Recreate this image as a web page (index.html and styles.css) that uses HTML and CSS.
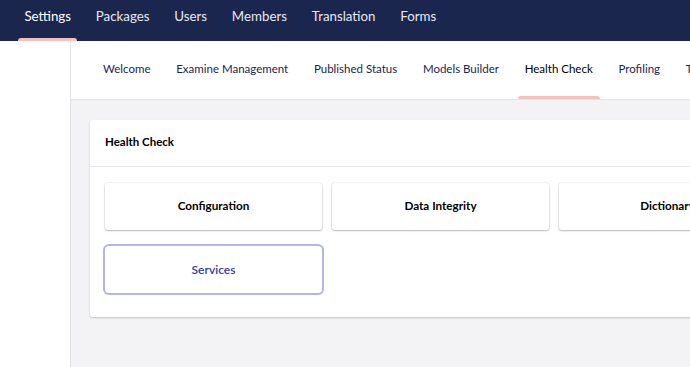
FILE: index.html
```html
<!DOCTYPE html>
<html lang="en">
<head>
<meta charset="utf-8">
<title>Settings - Health Check</title>
<link rel="stylesheet" href="styles.css">
</head>
<body>
<div class="app">
  <header class="topbar">
    <nav class="sections">
      <a class="section active">Settings</a>
      <a class="section">Packages</a>
      <a class="section">Users</a>
      <a class="section">Members</a>
      <a class="section">Translation</a>
      <a class="section">Forms</a>
    </nav>
  </header>
  <div class="body">
    <aside class="sidebar"></aside>
    <main class="main">
      <nav class="tabs">
        <a class="tab">Welcome</a>
        <a class="tab">Examine Management</a>
        <a class="tab">Published Status</a>
        <a class="tab">Models Builder</a>
        <a class="tab active">Health Check</a>
        <a class="tab">Profiling</a>
        <a class="tab">Telemetry data</a>
      </nav>
      <div class="content">
        <section class="card">
          <div class="card-header">Health Check</div>
          <div class="card-body">
            <div class="group">Configuration</div>
            <div class="group">Data Integrity</div>
            <div class="group">Dictionary</div>
            <div class="group">Live Environment</div>
            <div class="group focused">Services</div>
          </div>
        </section>
      </div>
    </main>
  </div>
</div>
</body>
</html>
```
FILE: styles.css
```css
* { box-sizing: border-box; }
html, body { margin: 0; padding: 0; }
body {
  font-family: Lato, "Open Sans", "Liberation Sans", sans-serif;
  width: 690px;
  height: 367px;
  overflow: hidden;
  background: #f3f3f5;
}
.app { display: flex; flex-direction: column; height: 367px; }
.topbar {
  height: 41px;
  background: #1b264f;
  display: flex;
  align-items: stretch;
  flex: none;
}
.sections { display: flex; padding-left: 12px; }
.section {
  position: relative;
  display: flex;
  align-items: center;
  padding: 0 12.4px 10px;
  color: #e6e8f0;
  font-size: 13.3px;
  white-space: nowrap;
}
.section.active { color: #ffffff; }
.section.active::after {
  content: "";
  position: absolute;
  left: 6px;
  right: 6px;
  bottom: 0;
  height: 3px;
  border-radius: 3px 3px 0 0;
  background: #f5c1bc;
}
.body { display: flex; flex: 1; min-height: 0; }
.sidebar {
  width: 71px;
  flex: none;
  background: #ffffff;
  border-right: 1px solid #e3e3e6;
}
.main { flex: 1; min-width: 0; overflow: hidden; display: flex; flex-direction: column; }
.tabs {
  height: 59px;
  flex: none;
  background: #ffffff;
  border-bottom: 1px solid #e3e3e6;
  display: flex;
  gap: 11.7px;
  padding-left: 25px;
  white-space: nowrap;
}
.tab {
  position: relative;
  display: flex;
  align-items: center;
  padding: 0 7px 3px;
  font-size: 11.5px;
  color: #1b264f;
}
.tab.active { color: #000000; }
.tab.active::after {
  content: "";
  position: absolute;
  left: 0;
  right: 0;
  bottom: 0;
  height: 3px;
  border-radius: 3px 3px 0 0;
  background: #f5c1bc;
}
.content { padding: 20px 0 0 19px; }
.card {
  width: 960px;
  background: #ffffff;
  border-radius: 3px;
  box-shadow: 0 1px 2px rgba(0, 0, 0, 0.2);
}
.card-header {
  height: 47px;
  display: flex;
  align-items: center;
  padding: 0 15px 3px;
  border-bottom: 1px solid #e9e9eb;
  font-size: 11.5px;
  font-weight: 700;
  color: #000000;
}
.card-body {
  display: grid;
  grid-template-columns: repeat(4, 217px);
  grid-auto-rows: 47px;
  gap: 16px 10px;
  padding: 16px 15px 24px;
}
.group {
  display: flex;
  align-items: center;
  justify-content: center;
  padding-bottom: 3px;
  background: #ffffff;
  border-radius: 3px;
  box-shadow: 0 1px 2px rgba(0, 0, 0, 0.25), 0 0 0 1px rgba(0, 0, 0, 0.04);
  font-size: 11.7px;
  font-weight: 700;
  color: #000000;
  white-space: nowrap;
}
.group.focused {
  padding-bottom: 0;
  font-weight: 600;
  font-size: 12px;
  color: #2f3ba8;
  border-radius: 4px;
  box-shadow: 0 0 0 2px #b3b6e3, 0 1px 2px rgba(0, 0, 0, 0.3);
}
```
